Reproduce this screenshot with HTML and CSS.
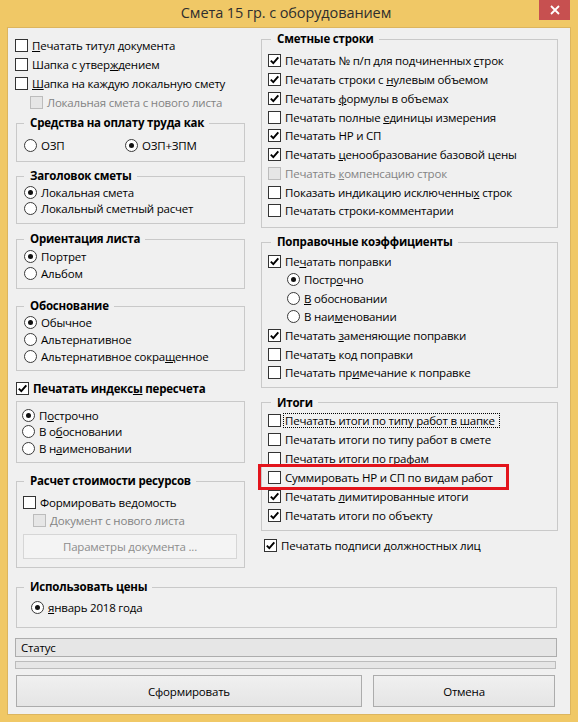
FILE: index.html
```html
<!DOCTYPE html>
<html lang="ru">
<head>
<meta charset="utf-8">
<title>Смета 15 гр. с оборудованием</title>
<link rel="stylesheet" href="styles.css">
</head>
<body>
<div class="window">
  <div class="titlebar">
    <div class="title">Смета 15 гр. с оборудованием</div>
    <div class="close"><svg width="10" height="10" viewBox="0 0 10 10"><path d="M1 1L9 9M9 1L1 9" stroke="#fff" stroke-width="1.8" fill="none"/></svg></div>
  </div>
  <div class="client">
    <div class="main">
      <div class="columns">
        <div class="left">
          <div class="checks">
            <div class="row"><span class="cb"></span><span><u>П</u>ечатать титул документа</span></div>
            <div class="row"><span class="cb"></span><span>Шапка с утвер<u>ж</u>дением</span></div>
            <div class="row"><span class="cb"></span><span><u>Ш</u>апка на каждую локальную смету</span></div>
            <div class="row dis ind15"><span class="cb"></span><span>Локальная смета с нового листа</span></div>
          </div>

          <fieldset class="lg g-sred">
            <legend>Средства на оплату труда как</legend>
            <div class="row h17">
              <div class="opt w101"><span class="rb"></span><span>ОЗП</span></div>
              <div class="opt"><span class="rb on"></span><span>ОЗП+ЗПМ</span></div>
            </div>
          </fieldset>

          <fieldset class="lg g-zag">
            <legend>Заголовок сметы</legend>
            <div class="row h16"><span class="rb on"></span><span>Локальная смета</span></div>
            <div class="row h16"><span class="rb"></span><span>Локальный сметный расчет</span></div>
          </fieldset>

          <fieldset class="lg g-or">
            <legend>Ориентация листа</legend>
            <div class="row h17"><span class="rb on"></span><span>Портрет</span></div>
            <div class="row h17"><span class="rb"></span><span>Альбом</span></div>
          </fieldset>

          <fieldset class="lg g-obos">
            <legend>Обоснование</legend>
            <div class="row h17"><span class="rb on"></span><span>Обычное</span></div>
            <div class="row h17"><span class="rb"></span><span>Альтернативное</span></div>
            <div class="row h17"><span class="rb"></span><span>Альтернативное сокра<u>щ</u>енное</span></div>
          </fieldset>

          <div class="row idx"><span class="cb on"><svg viewBox="0 0 11 11"><path d="M1.8 5.6L4.3 8.2L9.3 2.4" stroke="#000" stroke-width="1.9" fill="none"/></svg></span><span class="bold">Печатать индекс<u>ы</u> пересчета</span></div>
          <div class="box g-idx">
            <div class="row h165"><span class="rb on"></span><span>П<u>о</u>строчно</span></div>
            <div class="row h165"><span class="rb"></span><span>В о<u>б</u>основании</span></div>
            <div class="row h165"><span class="rb"></span><span>В н<u>а</u>именовании</span></div>
          </div>

          <fieldset class="lg g-ras">
            <legend>Расчет стоимости ресурсов</legend>
            <div class="row h18"><span class="cb"></span><span>Формировать ведомость</span></div>
            <div class="row h18 dis ind10"><span class="cb"></span><span>Документ с нового листа</span></div>
            <div class="btn-dis">Параметры документа ...</div>
          </fieldset>
        </div>

        <div class="right">
          <fieldset class="rg g-smet">
            <legend>Сметные строки</legend>
            <div class="row"><span class="cb on"><svg viewBox="0 0 11 11"><path d="M1.8 5.6L4.3 8.2L9.3 2.4" stroke="#000" stroke-width="1.9" fill="none"/></svg></span><span>Печатать № п/п для подчиненных <u>с</u>трок</span></div>
            <div class="row"><span class="cb on"><svg viewBox="0 0 11 11"><path d="M1.8 5.6L4.3 8.2L9.3 2.4" stroke="#000" stroke-width="1.9" fill="none"/></svg></span><span>Печатать строки с <u>н</u>улевым объемом</span></div>
            <div class="row"><span class="cb on"><svg viewBox="0 0 11 11"><path d="M1.8 5.6L4.3 8.2L9.3 2.4" stroke="#000" stroke-width="1.9" fill="none"/></svg></span><span>Печатать <u>ф</u>ормулы в объемах</span></div>
            <div class="row"><span class="cb"></span><span>Печатать полные <u>е</u>диницы измерения</span></div>
            <div class="row"><span class="cb on"><svg viewBox="0 0 11 11"><path d="M1.8 5.6L4.3 8.2L9.3 2.4" stroke="#000" stroke-width="1.9" fill="none"/></svg></span><span>Печатать НР и СП</span></div>
            <div class="row"><span class="cb on"><svg viewBox="0 0 11 11"><path d="M1.8 5.6L4.3 8.2L9.3 2.4" stroke="#000" stroke-width="1.9" fill="none"/></svg></span><span>Печатать <u>ц</u>енообразование базовой цены</span></div>
            <div class="row dis"><span class="cb"></span><span>Печатать <u>к</u>омпенсацию строк</span></div>
            <div class="row"><span class="cb"></span><span>Показать индикацию исключенны<u>х</u> строк</span></div>
            <div class="row"><span class="cb"></span><span>Печатать строки-комментарии</span></div>
          </fieldset>

          <fieldset class="rg g-popr">
            <legend>Поправочные коэффициенты</legend>
            <div class="row"><span class="cb on"><svg viewBox="0 0 11 11"><path d="M1.8 5.6L4.3 8.2L9.3 2.4" stroke="#000" stroke-width="1.9" fill="none"/></svg></span><span>Пе<u>ч</u>атать поправки</span></div>
            <div class="row ind19"><span class="rb on"></span><span>Постр<u>о</u>чно</span></div>
            <div class="row ind19"><span class="rb"></span><span><u>В</u> обосновании</span></div>
            <div class="row ind19"><span class="rb"></span><span>В наи<u>м</u>еновании</span></div>
            <div class="row"><span class="cb on"><svg viewBox="0 0 11 11"><path d="M1.8 5.6L4.3 8.2L9.3 2.4" stroke="#000" stroke-width="1.9" fill="none"/></svg></span><span>Печатать <u>з</u>аменяющие поправки</span></div>
            <div class="row"><span class="cb"></span><span>Печатат<u>ь</u> код поправки</span></div>
            <div class="row"><span class="cb"></span><span>Печатать пр<u>и</u>мечание к поправке</span></div>
          </fieldset>

          <fieldset class="rg g-itog">
            <legend>Итоги</legend>
            <div class="row"><span class="cb"></span><span class="focus">Печатать итоги по типу работ в шапке</span></div>
            <div class="row"><span class="cb"></span><span>Печатать итоги по типу работ в смете</span></div>
            <div class="row"><span class="cb"></span><span>Печатать итоги по графам</span></div>
            <div class="row"><span class="cb"></span><span>Суммировать НР и СП по видам работ</span></div>
            <div class="row"><span class="cb on"><svg viewBox="0 0 11 11"><path d="M1.8 5.6L4.3 8.2L9.3 2.4" stroke="#000" stroke-width="1.9" fill="none"/></svg></span><span>Печатать <u>л</u>имитированные итоги</span></div>
            <div class="row"><span class="cb on"><svg viewBox="0 0 11 11"><path d="M1.8 5.6L4.3 8.2L9.3 2.4" stroke="#000" stroke-width="1.9" fill="none"/></svg></span><span>Печатать итоги по объекту</span></div>
          </fieldset>

          <div class="row sign"><span class="cb on"><svg viewBox="0 0 11 11"><path d="M1.8 5.6L4.3 8.2L9.3 2.4" stroke="#000" stroke-width="1.9" fill="none"/></svg></span><span>Печатать подписи <u>д</u>олжностных лиц</span></div>
        </div>
      </div>

      <fieldset class="lg g-price">
        <legend>Использовать цены</legend>
        <div class="row h17 ind7"><span class="rb on"></span><span><u>я</u>нварь 2018 года</span></div>
      </fieldset>

      <div class="status">Статус</div>
      <div class="progress"></div>
      <div class="buttons">
        <div class="btn b-make">Сформировать</div>
        <div class="btn b-cancel">Отмена</div>
      </div>
    </div>
    <div class="highlight"></div>
  </div>
</div>
</body>
</html>
```

FILE: styles.css
```css
* { box-sizing: border-box; }
html, body { margin: 0; padding: 0; }
body {
  width: 578px;
  height: 722px;
  overflow: hidden;
  font-family: "Open Sans", "Noto Sans", "DejaVu Sans", sans-serif;
  font-size: 11.5px;
  letter-spacing: -0.2px;
  color: #000;
}
u { text-decoration: underline; text-underline-offset: 1px; }

.window {
  width: 578px;
  height: 722px;
  background: #f0c866;
  display: flex;
  flex-direction: column;
  position: relative;
}
.titlebar { height: 28px; flex: none; position: relative; }
.title {
  text-align: center;
  line-height: 26px;
  font-size: 14.5px;
  letter-spacing: -0.1px;
  color: #2e2e2e;
  padding-right: 6px;
}
.close {
  position: absolute;
  top: 0;
  right: 8px;
  width: 31px;
  height: 20px;
  background: #c75050;
  display: flex;
  align-items: center;
  justify-content: center;
}
.close svg { display: block; }

.client {
  flex: 1;
  margin: 0 8px 8px;
  background: #f0f0f0;
  position: relative;
  box-shadow: 0 0 0 1px #dcb55e;
}
.main { padding: 3px 12px 0 7px; }
.columns { display: flex; gap: 16px; }
.left { width: 230px; padding-top: 5px; }
.right { width: 297px; }

.row {
  display: flex;
  align-items: center;
  height: 19px;
  white-space: nowrap;
}
.h16 { height: 16px; }
.h165 { height: 16.5px; }
.h17 { height: 17px; }
.h18 { height: 18px; }
.ind7 { margin-left: 7px; }
.ind10 { margin-left: 10px; }
.ind15 { margin-left: 15px; }
.ind19 { margin-left: 19px; }
.bold { font-weight: bold; }
.dis { color: #838383; }
.dis .cb { border-color: #bcbcbc; background: #e6e6e6; }

.opt { display: flex; align-items: center; }
.w101 { width: 101px; }

.cb {
  flex: none;
  width: 13px;
  height: 13px;
  border: 1px solid #333;
  background: #fff;
  margin-right: 4px;
  display: flex;
  align-items: center;
  justify-content: center;
}
.cb svg { width: 11px; height: 11px; display: block; }
.rb {
  flex: none;
  width: 13px;
  height: 13px;
  border: 1px solid #3a3a3a;
  border-radius: 50%;
  background: #fff;
  margin-right: 4px;
  display: flex;
  align-items: center;
  justify-content: center;
}
.rb.on::after {
  content: "";
  width: 5px;
  height: 5px;
  border-radius: 50%;
  background: #111;
}

fieldset {
  margin: 0;
  min-width: 0;
  border: 1px solid #c9c9c9;
  padding: 0 7px;
}
legend {
  font-weight: bold;
  line-height: 16px;
  height: 16px;
  padding: 0 5px 0 6px;
}
.lg { margin-left: 1px; }
.rg { padding-left: 6px; }
.rg legend { margin-left: 3px; }

.g-sred { margin-top: 3px; padding-top: 6px; padding-bottom: 7px; }
.g-zag { margin-top: 6px; padding-bottom: 7px; }
.g-or { margin-top: 7px; padding-top: 1px; padding-bottom: 6px; }
.g-obos { margin-top: 9px; padding-bottom: 5px; }
.idx { margin-top: 8px; margin-left: 1px; }
.box {
  border: 1px solid #c9c9c9;
  margin: 3px 0 0 1px;
  padding: 5px 7px 5px 7px;
}
.g-idx .rb { margin-left: -2px; }
.g-ras { margin-top: 10.5px; padding: 4px 7px 8px 6px; }
.g-ras legend { margin-left: 1px; }
.btn-dis {
  margin-top: 5px;
  height: 25px;
  border: 1px solid #d6d6d6;
  background: #f4f4f4;
  color: #8d8d8d;
  display: flex;
  align-items: center;
  justify-content: center;
}

.g-smet { padding-top: 4.5px; padding-bottom: 7px; }
.g-smet .row { height: 18.75px; }
.g-popr { margin-top: 6px; padding-top: 1.5px; padding-bottom: 5px; }
.g-popr .row { height: 18.6px; }
.g-itog { margin-top: 7px; padding-top: 0.5px; padding-bottom: 6px; }
.g-itog .row { height: 18.85px; }
.focus {
  outline: 1px dotted #000;
  padding: 0 4px 0 1px;
  margin-left: -1px;
  line-height: 13px;
}
.sign { margin-top: 5px; margin-left: 3px; }

.g-price { margin: 11px 1px 0 1px; padding-top: 3.5px; padding-bottom: 11px; }

.status {
  margin: 10.5px 1px 0 0;
  height: 19px;
  border: 1px solid #adadad;
  background: #e6e6e6;
  padding-left: 5px;
  line-height: 17px;
}
.progress {
  margin: 4px 2px 0 0;
  height: 8px;
  border: 1px solid #bcbcbc;
  background: #e6e6e6;
}
.buttons {
  display: flex;
  gap: 11px;
  margin-top: 6px;
  padding-left: 1px;
}
.btn {
  height: 32px;
  border: 1px solid #acacac;
  background: linear-gradient(#f0f0f0, #e5e5e5);
  display: flex;
  align-items: center;
  justify-content: center;
}
.b-make { width: 346px; }
.b-cancel { width: 182px; }

.highlight {
  position: absolute;
  left: 250px;
  top: 436px;
  width: 251px;
  height: 26px;
  border: 3px solid #e3141c;
}
```
